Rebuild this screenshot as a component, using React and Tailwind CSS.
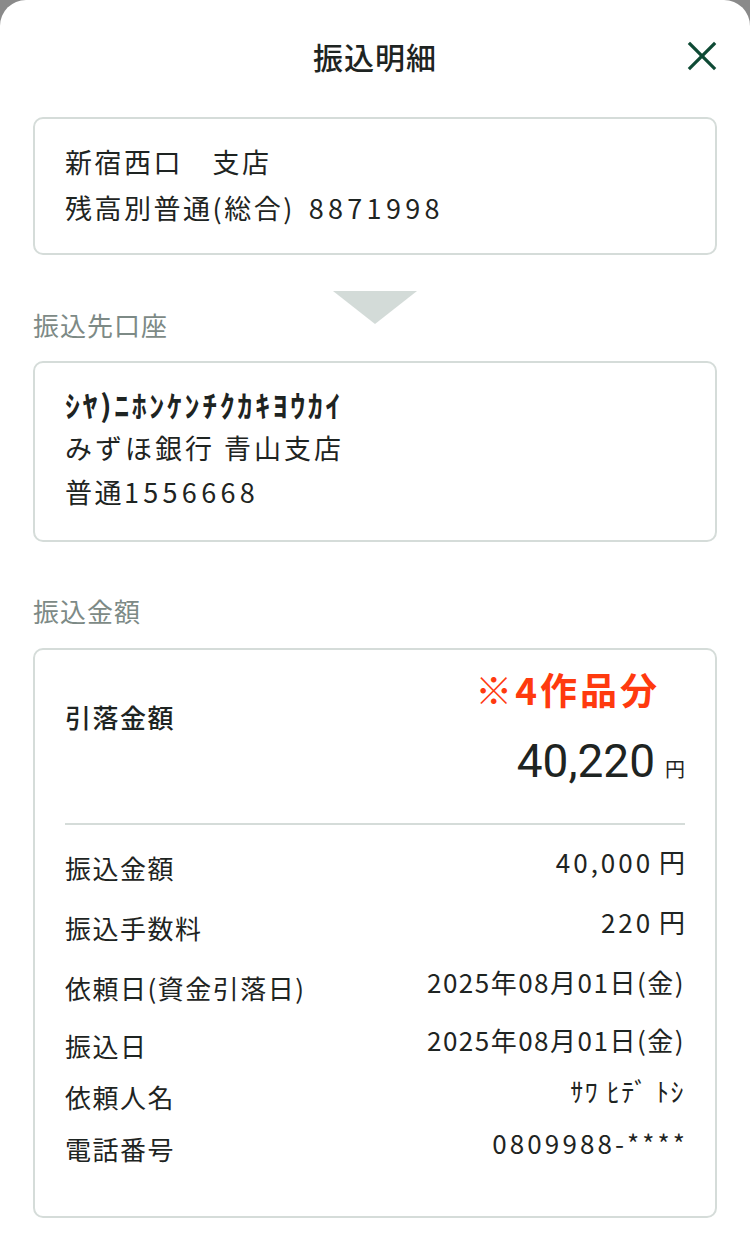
import React from "react";

const F = { fontFamily: '"Noto Sans CJK JP", "Noto Sans", sans-serif' };

function Row({ label, value, cls }) {
  return (
    <div className={`flex justify-between items-center leading-[40px] ${cls}`}>
      <span className="text-[26px] tracking-[1.5px] text-[#1e2422] translate-y-[3px]">{label}</span>
      <span className="text-[26px] text-[#1e2422] -translate-y-[3px] whitespace-pre">{value}</span>
    </div>
  );
}

export default function App() {
  return (
    <div className="min-h-[1254px] bg-[#8a8a8a]" style={F}>
      <div className="min-h-[1254px] bg-white rounded-t-[26px] px-[33px]">
        <div className="h-[112px] grid grid-cols-[1fr_auto_1fr] items-center">
          <div />
          <div className="text-[30px] font-medium text-[#1e2422] tracking-[1px]">振込明細</div>
          <div className="flex justify-end">
            <svg width="30" height="30" viewBox="0 0 30 30" fill="none" stroke="#0e4a35" strokeWidth="3.2" strokeLinecap="square">
              <line x1="3" y1="3" x2="27" y2="27" />
              <line x1="27" y1="3" x2="3" y2="27" />
            </svg>
          </div>
        </div>

        <div className="mt-[5px] border-2 border-[#d5dcd9] rounded-[10px] px-[30px] pt-[20px] pb-[22px] text-[27px] tracking-[2.5px] leading-[46px] text-[#1e2422]">
          <div className="whitespace-pre">新宿西口　支店</div>
          <div>
            残高別普通(総合)
            <span className="ml-[14px] tracking-[4.3px]">8871998</span>
          </div>
        </div>

        <div className="h-[106px] grid grid-cols-[1fr_84px_1fr]">
          <div className="mt-[52px] text-[26px] leading-[36px] tracking-[1px] text-[#7d8a86]">振込先口座</div>
          <svg className="mt-[36px]" width="84" height="33" viewBox="0 0 84 33">
            <polygon points="0,0 84,0 42,33" fill="#d3dbd8" />
          </svg>
          <div />
        </div>

        <div className="border-2 border-[#d5dcd9] rounded-[10px] px-[30px] pt-[19px] pb-[26px] leading-[44px] text-[#1e2422]">
          <div className="text-[30px] font-bold tracking-[2.6px]">ｼﾔ)ﾆﾎﾝｹﾝﾁｸｶｷﾖｳｶｲ</div>
          <div className="text-[27px] tracking-[3px]">みずほ銀行 青山支店</div>
          <div className="text-[27px] tracking-[2.5px]">
            普通<span className="tracking-[4.3px]">1556668</span>
          </div>
        </div>

        <div className="h-[106px]">
          <div className="pt-[51px] text-[26px] leading-[36px] tracking-[1px] text-[#7d8a86]">振込金額</div>
        </div>

        <div className="border-2 border-[#d5dcd9] rounded-[10px] px-[30px] pt-[17px] pb-[50px]">
          <div className="flex justify-between items-start">
            <div className="mt-[30px] text-[26px] leading-[40px] font-medium tracking-[1.5px] text-[#1e2422]">引落金額</div>
            <div className="flex flex-col items-end">
              <div className="mr-[25px] text-[37px] leading-[44px] font-bold tracking-[3px] text-[#ff3a0e]">※4作品分</div>
              <div className="mt-[22px] mb-[26px] flex items-baseline leading-[56px] text-[#1e2422]">
                <span className="text-[46px]" style={{ fontFamily: 'Roboto, "Noto Sans", sans-serif' }}>40,220</span>
                <span className="ml-[10px] text-[20px]">円</span>
              </div>
            </div>
          </div>
          <div className="h-[2px] bg-[#d5dcd9]" />
          <Row cls="mt-[20px]" label="振込金額" value={<><span className="tracking-[3px]">40,000</span> 円</>} />
          <Row cls="mt-[20px]" label="振込手数料" value={<><span className="tracking-[3px]">220</span> 円</>} />
          <Row cls="mt-[20px]" label="依頼日(資金引落日)" value={<span className="tracking-[1.5px]">2025年08月01日(金)</span>} />
          <Row cls="mt-[18px]" label="振込日" value={<span className="tracking-[1.5px]">2025年08月01日(金)</span>} />
          <Row cls="mt-[11px]" label="依頼人名" value={<span className="tracking-[1.5px]">ｻﾜ ﾋﾃﾞ ﾄｼ</span>} />
          <Row cls="mt-[12px]" label="電話番号" value={<span className="tracking-[3.1px] -mr-[3.1px]">0809988-****</span>} />
        </div>
      </div>
    </div>
  );
}
